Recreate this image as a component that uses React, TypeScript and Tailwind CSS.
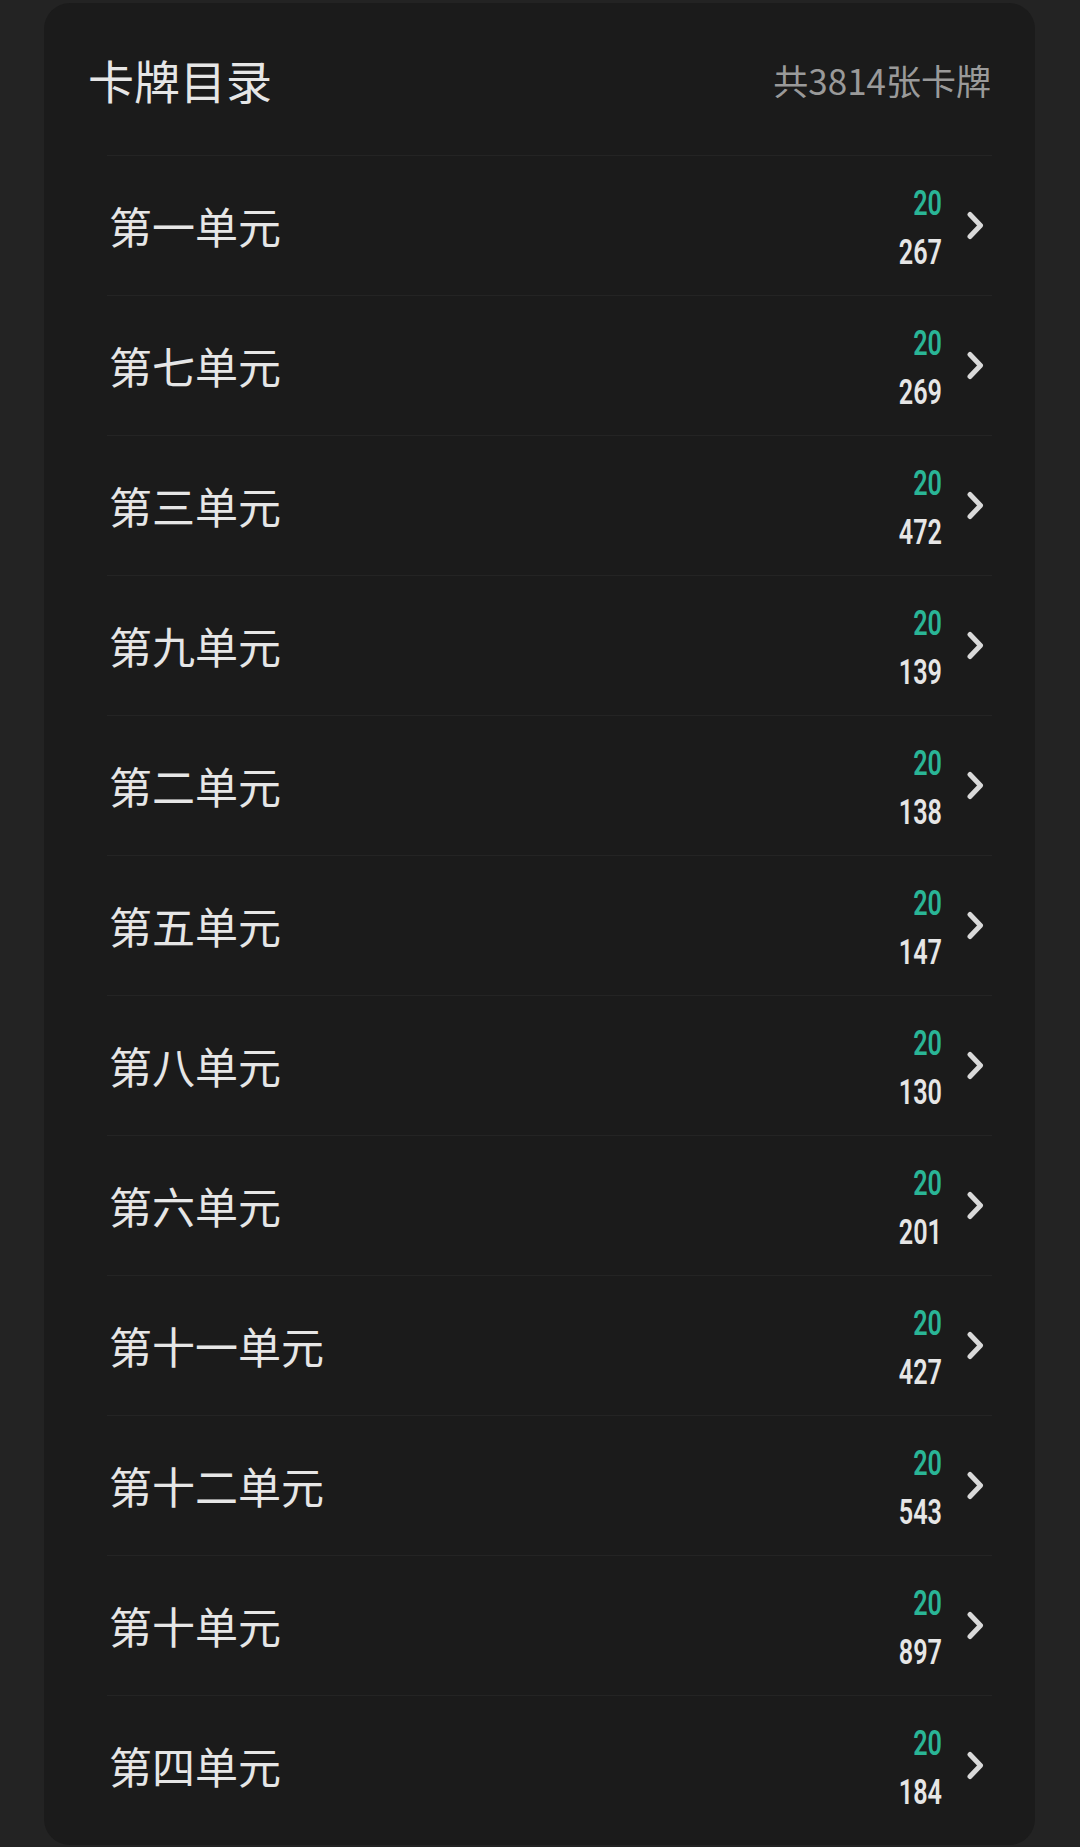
const units = [
  { name: "第一单元", total: 267 },
  { name: "第七单元", total: 269 },
  { name: "第三单元", total: 472 },
  { name: "第九单元", total: 139 },
  { name: "第二单元", total: 138 },
  { name: "第五单元", total: 147 },
  { name: "第八单元", total: 130 },
  { name: "第六单元", total: 201 },
  { name: "第十一单元", total: 427 },
  { name: "第十二单元", total: 543 },
  { name: "第十单元", total: 897 },
  { name: "第四单元", total: 184 },
];

const cjk = { fontFamily: '"Noto Sans CJK SC", "Noto Sans", sans-serif' };
const num = { fontFamily: 'Roboto, "Liberation Sans", sans-serif' };

function Chevron() {
  return (
    <svg width="17" height="29" viewBox="0 0 17 29" fill="none">
      <path
        d="M3 3.5 L13.5 14.5 L3 25.5"
        stroke="#d9d9d9"
        strokeWidth="5"
        strokeLinecap="round"
        strokeLinejoin="round"
      />
    </svg>
  );
}

export default function App() {
  return (
    <div className="min-h-[1847px] bg-[#232323] pl-[44px] pr-[45px] pt-[3px]" style={cjk}>
      <div className="h-[1842px] rounded-[26px] bg-[#1b1b1b]">
        {/* Header */}
        <div className="flex h-[152px] items-center justify-between px-[44px]">
          <h1 className="text-[46px] font-normal leading-none text-[#e6e6e6]">卡牌目录</h1>
          <span className="text-[35px] leading-none text-[#9a9a9a]">共3814张卡牌</span>
        </div>

        {/* Units */}
        <ul className="ml-[63px] mr-[43px]">
          {units.map((unit, i) => (
            <li
              key={i}
              className="flex h-[140px] items-center justify-between border-t border-[#242424] pl-[2px] pr-[8px]"
            >
              <span className="text-[43px] leading-none text-[#e6e6e6]">{unit.name}</span>
              <div className="flex items-center gap-[25px]">
                <div className="flex flex-col items-end pt-[4px] font-semibold" style={num}>
                  <span className="origin-right scale-x-[0.72] text-[35px] leading-[49px] text-[#2ab596]">
                    20
                  </span>
                  <span className="origin-right scale-x-[0.72] text-[35px] leading-[49px] text-[#e6e6e6]">
                    {unit.total}
                  </span>
                </div>
                <Chevron />
              </div>
            </li>
          ))}
        </ul>
      </div>
    </div>
  );
}
